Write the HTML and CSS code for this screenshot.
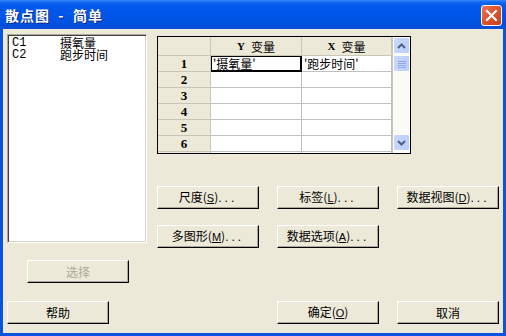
FILE: index.html
```html
<!DOCTYPE html>
<html lang="zh">
<head>
    <meta charset="UTF-8">
    <title>散点图 - 简单</title>
    <link rel="stylesheet" href="styles.css">
</head>
<body>
    <div class="window">
        <div class="titlebar">
            <span class="title">散点图  -  简单</span>
            <button class="close" type="button">
                <svg width="13" height="13" viewBox="0 0 13 13">
                    <path d="M2 2 L11 11 M11 2 L2 11" stroke="#fff" stroke-width="2.2" stroke-linecap="square"/>
                </svg>
            </button>
        </div>

        <div class="dialog">
            <div class="top">
                <div class="left-col">
                    <div class="listbox">
                        <div class="list-item"><span class="col-id">C1</span><span>摄氧量</span></div>
                        <div class="list-item"><span class="col-id">C2</span><span>跑步时间</span></div>
                    </div>
                    <button class="btn select-btn" type="button" disabled>选择</button>
                </div>

                <div class="right-col">
                    <div class="sheet">
                        <div class="sheet-grid">
                            <div class="hcell corner"></div>
                            <div class="hcell"><b class="axis">Y</b> 变量</div>
                            <div class="hcell"><b class="axis">X</b> 变量</div>

                            <div class="rcell">1</div>
                            <div class="cell current">'摄氧量'</div>
                            <div class="cell">'跑步时间'</div>

                            <div class="rcell">2</div>
                            <div class="cell"></div>
                            <div class="cell"></div>

                            <div class="rcell">3</div>
                            <div class="cell"></div>
                            <div class="cell"></div>

                            <div class="rcell">4</div>
                            <div class="cell"></div>
                            <div class="cell"></div>

                            <div class="rcell">5</div>
                            <div class="cell"></div>
                            <div class="cell"></div>

                            <div class="rcell">6</div>
                            <div class="cell"></div>
                            <div class="cell"></div>

                            <div class="rcell"></div>
                            <div class="cell"></div>
                            <div class="cell"></div>
                        </div>
                        <div class="scrollbar">
                            <div class="sb-btn">
                                <svg width="9" height="6" viewBox="0 0 9 6"><path d="M1 5 L4.5 1.5 L8 5" fill="none" stroke="#4d6185" stroke-width="2"/></svg>
                            </div>
                            <div class="sb-thumb">
                                <svg width="8" height="8" viewBox="0 0 8 8"><path d="M0 1.5H8M0 3.5H8M0 5.5H8M0 7.5H8" stroke="#8ea8e8" stroke-width="1"/></svg>
                            </div>
                            <div class="sb-track"></div>
                            <div class="sb-btn">
                                <svg width="9" height="6" viewBox="0 0 9 6"><path d="M1 1 L4.5 4.5 L8 1" fill="none" stroke="#4d6185" stroke-width="2"/></svg>
                            </div>
                        </div>
                    </div>

                    <div class="btn-row first">
                        <button class="btn" type="button">尺度(<u>S</u>)<span class="dots">...</span></button>
                        <button class="btn" type="button">标签(<u>L</u>)<span class="dots">...</span></button>
                        <button class="btn" type="button">数据视图(<u>D</u>)<span class="dots">...</span></button>
                    </div>
                    <div class="btn-row second">
                        <button class="btn" type="button">多图形(<u>M</u>)<span class="dots">...</span></button>
                        <button class="btn" type="button">数据选项(<u>A</u>)<span class="dots">...</span></button>
                    </div>
                </div>
            </div>

            <div class="bottom">
                <button class="btn" type="button">帮助</button>
                <div class="spacer"></div>
                <button class="btn" type="button">确定(<u>O</u>)</button>
                <button class="btn" type="button">取消</button>
            </div>
        </div>
    </div>
</body>
</html>
```

FILE: styles.css
```css
body {
    margin: 0;
    font-family: "Noto Sans CJK SC", "DejaVu Sans", sans-serif;
    font-size: 12px;
    background-color: #ece9d8;
}

.window {
    width: 506px;
    height: 336px;
    display: flex;
    flex-direction: column;
    background-color: #0a53e0;
}

.titlebar {
    height: 29px;
    flex: none;
    display: flex;
    align-items: center;
    padding: 0 4px 0 5px;
    background: linear-gradient(#3b8cf7 0, #1268f0 2px, #0058ee 6px, #0055e5 18px, #0050dc 25px, #0a4fd6 29px);
}

.title {
    flex: 1;
    color: #fff;
    font-weight: bold;
    font-size: 14px;
    letter-spacing: 1px;
    text-shadow: 1px 1px #0c2a8c;
    white-space: pre;
}

.close {
    width: 21px;
    height: 21px;
    margin-top: 1px;
    padding: 0;
    display: flex;
    align-items: center;
    justify-content: center;
    border: 1px solid #fff;
    border-radius: 3px;
    background: linear-gradient(135deg, #e9765a, #e0512b 50%, #c7401e);
}

.dialog {
    flex: 1;
    margin: 0 3px 3px 3px;
    padding: 5px 4px 9px 4px;
    display: flex;
    flex-direction: column;
    background-color: #ece9d8;
}

.top {
    display: flex;
    gap: 10px;
}

.left-col {
    width: 140px;
    display: flex;
    flex-direction: column;
}

.listbox {
    height: 209px;
    box-sizing: border-box;
    background-color: #fff;
    border: 1px solid;
    border-color: #aca899 #fff #fff #aca899;
    box-shadow: inset 1px 1px #404040, inset -1px -1px #d4d0c8;
    padding: 2px 4px;
}

.list-item {
    display: flex;
    height: 12px;
    line-height: 12px;
    overflow: visible;
}

.list-item span {
    display: block;
    height: 12px;
    line-height: 12px;
}

.col-id {
    width: 48px;
    font-family: "Liberation Mono", monospace;
    font-size: 12px;
}

.btn {
    width: 102px;
    height: 23px;
    padding: 0;
    box-sizing: border-box;
    background-color: #ece9d8;
    border: 1px solid;
    border-color: #fff #000 #000 #fff;
    box-shadow: inset -1px -1px #aca899;
    font-family: "Noto Sans CJK SC", "DejaVu Sans", sans-serif;
    font-size: 12px;
    color: #000;
    line-height: 20px;
}

.btn u {
    font-family: "Liberation Sans", sans-serif;
    font-size: 11px;
}

.btn .dots {
    letter-spacing: 3px;
    font-family: "Liberation Sans", sans-serif;
}

.btn:disabled {
    color: #aca899;
}

.select-btn {
    margin-top: 17px;
    margin-left: 20px;
}

.right-col {
    display: flex;
    flex-direction: column;
}

.sheet {
    margin-top: 2px;
    width: 254px;
    height: 118px;
    box-sizing: border-box;
    border: 1px solid #000;
    display: flex;
    overflow: hidden;
    background-color: #fff;
}

.sheet-grid {
    display: grid;
    grid-template-columns: 53px 91px 90px;
    grid-template-rows: 19px repeat(7, 16px);
}

.hcell,
.rcell,
.cell {
    box-sizing: border-box;
    border-right: 1px solid #c0c0c0;
    border-bottom: 1px solid #c0c0c0;
    display: flex;
    align-items: center;
    white-space: nowrap;
}

.hcell {
    background-color: #ece9d8;
    justify-content: center;
    border-right-color: #c9c6b6;
    border-bottom-color: #c9c6b6;
    font-size: 12px;
}

.axis {
    font-family: "Liberation Serif", serif;
    font-size: 11px;
    margin-right: 6px;
}

.rcell {
    background-color: #ece9d8;
    justify-content: center;
    border-right-color: #c9c6b6;
    border-bottom-color: #c9c6b6;
    font-family: "Liberation Serif", serif;
    font-weight: bold;
    font-size: 13px;
}

.cell {
    padding-left: 2px;
}

.cell.current {
    box-shadow: inset 0 0 0 1px #000;
    border-right: 1px solid #000;
    border-bottom: 1px solid #000;
}

.scrollbar {
    width: 18px;
    display: flex;
    flex-direction: column;
    background-color: #fbfbf8;
    border-left: 1px solid #c9c6b6;
    box-sizing: border-box;
}

.sb-btn,
.sb-thumb {
    height: 17px;
    flex: none;
    box-sizing: border-box;
    border: 1px solid #fff;
    border-radius: 2px;
    background: linear-gradient(90deg, #c8d7fd, #bccffb);
    display: flex;
    align-items: center;
    justify-content: center;
}

.sb-thumb {
    margin-top: 1px;
}

.sb-track {
    flex: 1;
    max-height: 62px;
}

.btn-row {
    display: flex;
    gap: 18px;
}

.btn-row.first {
    margin-top: 32px;
}

.btn-row.second {
    margin-top: 16px;
}

.bottom {
    margin-top: auto;
    display: flex;
    gap: 18px;
}

.spacer {
    flex: 1;
}
```
